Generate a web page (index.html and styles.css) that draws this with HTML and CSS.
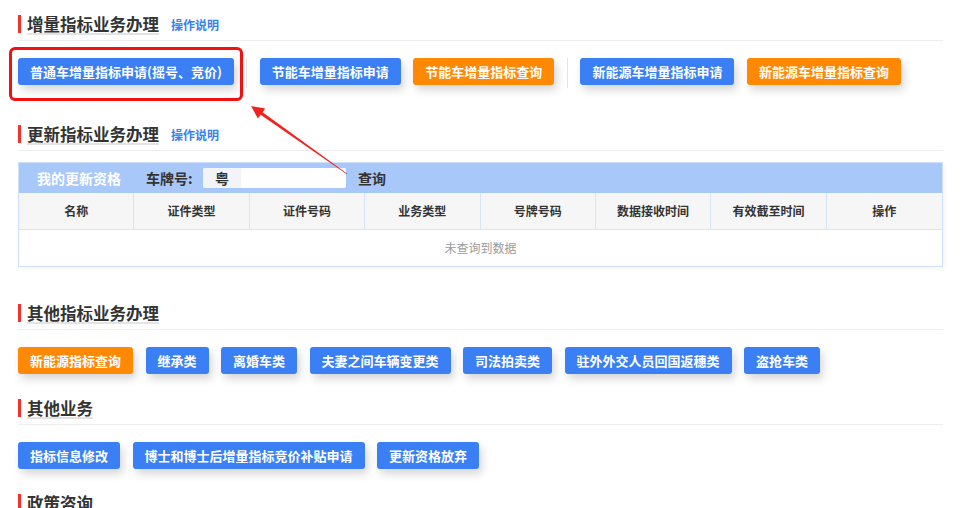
FILE: index.html
```html
<!DOCTYPE html>
<html lang="zh-CN">
<head>
<meta charset="utf-8">
<title>指标业务办理</title>
<link rel="stylesheet" href="styles.css">
</head>
<body>
<div class="page">
  <section class="section section-apply">
    <div class="sec-head">
      <span class="sec-bar"></span>
      <h2 class="sec-title">增量指标业务办理</h2>
      <a class="sec-help" href="#">操作说明</a>
    </div>
    <div class="btn-row">
      <span class="highlight"><button class="btn blue">普通车增量指标申请(摇号、竞价)</button></span>
      <span class="sep"></span>
      <button class="btn blue">节能车增量指标申请</button>
      <button class="btn orange">节能车增量指标查询</button>
      <span class="sep"></span>
      <button class="btn blue">新能源车增量指标申请</button>
      <button class="btn orange">新能源车增量指标查询</button>
    </div>
  </section>

  <section class="section section-renew">
    <div class="sec-head">
      <span class="sec-bar"></span>
      <h2 class="sec-title">更新指标业务办理</h2>
      <a class="sec-help" href="#">操作说明</a>
    </div>
    <div class="qual-box">
      <div class="qual-bar">
        <span class="qual-name">我的更新资格</span>
        <span class="plate-label">车牌号:</span>
        <span class="plate-input"><span class="plate-prefix">粤</span><span class="plate-field"></span></span>
        <span class="plate-query">查询</span>
      </div>
      <div class="grid-head">
        <div class="cell">名称</div>
        <div class="cell">证件类型</div>
        <div class="cell">证件号码</div>
        <div class="cell">业务类型</div>
        <div class="cell">号牌号码</div>
        <div class="cell">数据接收时间</div>
        <div class="cell">有效截至时间</div>
        <div class="cell">操作</div>
      </div>
      <div class="grid-empty">未查询到数据</div>
    </div>
  </section>

  <section class="section section-other">
    <div class="sec-head">
      <span class="sec-bar"></span>
      <h2 class="sec-title">其他指标业务办理</h2>
    </div>
    <div class="btn-row">
      <button class="btn orange">新能源指标查询</button>
      <button class="btn blue">继承类</button>
      <button class="btn blue">离婚车类</button>
      <button class="btn blue">夫妻之间车辆变更类</button>
      <button class="btn blue">司法拍卖类</button>
      <button class="btn blue">驻外外交人员回国返穗类</button>
      <button class="btn blue">盗抢车类</button>
    </div>
  </section>

  <section class="section section-misc">
    <div class="sec-head">
      <span class="sec-bar"></span>
      <h2 class="sec-title">其他业务</h2>
    </div>
    <div class="btn-row">
      <button class="btn blue">指标信息修改</button>
      <button class="btn blue">博士和博士后增量指标竞价补贴申请</button>
      <button class="btn blue">更新资格放弃</button>
    </div>
  </section>

  <section class="section section-policy">
    <div class="sec-head">
      <span class="sec-bar"></span>
      <h2 class="sec-title">政策咨询</h2>
    </div>
  </section>

  <svg class="arrow" width="960" height="200" viewBox="0 0 960 200" aria-hidden="true">
    <polygon points="251,106 265.2,108.6 262.6,112.2 347.3,173.7 346.8,174.3 260.6,114.8 257.9,118.4" fill="#f2231f"/>
  </svg>
</div>
</body>
</html>
```

FILE: styles.css
```css
html, body {
  margin: 0;
  padding: 0;
  background: #fff;
}
body {
  font-family: "Noto Sans CJK SC", "Noto Sans", "Liberation Sans", sans-serif;
  color: #333;
  width: 960px;
  height: 508px;
  overflow: hidden;
}
.page {
  position: relative;
  padding: 15px 17px 0 18px;
}
.section {
  margin: 0;
}
.section-renew { margin-top: 37px; }
.section-other { margin-top: 37px; }
.section-misc { margin-top: 25px; }
.section-policy { margin-top: 25px; }

.sec-head {
  display: flex;
  align-items: flex-start;
  padding-bottom: 5px;
  border-bottom: 1px solid #eeeeee;
}
.sec-bar {
  width: 3px;
  height: 18px;
  background: #f5312b;
  margin-right: 6px;
}
.sec-title {
  margin: 0;
  font-size: 16.5px;
  line-height: 18px;
  font-weight: 700;
  color: #333;
  border-bottom: 2px solid #e3e3e3;
}
.sec-help {
  margin-left: 12px;
  margin-top: 3px;
  font-size: 12px;
  line-height: 14px;
  font-weight: 700;
  color: #3c7ef0;
  text-decoration: none;
}

.btn-row {
  display: flex;
  align-items: flex-start;
  gap: 12.5px;
  margin-top: 17px;
}
.btn {
  height: 27px;
  padding: 0 12px;
  border: none;
  border-radius: 3px;
  font-family: inherit;
  font-size: 13px;
  font-weight: 700;
  color: #fff;
  line-height: 27px;
  white-space: nowrap;
  box-shadow: 3px 5px 8px rgba(0, 0, 0, 0.16);
  cursor: pointer;
}
.btn.blue { background: #3a7ff4; }
.btn.orange { background: #ff8905; }

.sep {
  width: 1px;
  height: 30px;
  background: #e4e4e4;
}

.highlight {
  position: relative;
  display: inline-flex;
}
.highlight::after {
  content: "";
  position: absolute;
  left: -9px;
  right: -9px;
  top: -11px;
  bottom: -16px;
  border: 3.5px solid #f3100f;
  border-radius: 6px;
  pointer-events: none;
}

.qual-box {
  margin-top: 11px;
  border: 1px solid #cfe0fa;
  box-shadow: 2px 2px 4px rgba(0, 0, 0, 0.04);
}
.qual-bar {
  height: 30px;
  background: #a8c8fa;
  display: flex;
  align-items: center;
  font-size: 14px;
  font-weight: 700;
}
.qual-name {
  color: #fff;
  margin-left: 18px;
  width: 109px;
}
.plate-label {
  color: #333;
  width: 57px;
}
.plate-input {
  display: flex;
  width: 143px;
  height: 20px;
  background: #fff;
  border-radius: 2px;
  overflow: hidden;
}
.plate-prefix {
  width: 38px;
  background: #f3f4f7;
  text-align: center;
  line-height: 20px;
  color: #333;
}
.plate-field {
  flex: 1;
}
.plate-query {
  margin-left: 12px;
  color: #333;
}

.grid-head {
  display: grid;
  grid-template-columns: repeat(8, 1fr);
  background: #f6f6f6;
  border-bottom: 1px solid #d6e5fb;
}
.cell {
  height: 36px;
  line-height: 36px;
  text-align: center;
  font-size: 12px;
  font-weight: 700;
  color: #333;
  border-right: 1px solid #d6e5fb;
}
.cell:last-child {
  border-right: none;
}
.grid-empty {
  height: 36px;
  line-height: 36px;
  text-align: center;
  font-size: 12px;
  color: #9a9a9a;
}

.arrow {
  position: absolute;
  left: 0;
  top: 0;
  pointer-events: none;
}
```
